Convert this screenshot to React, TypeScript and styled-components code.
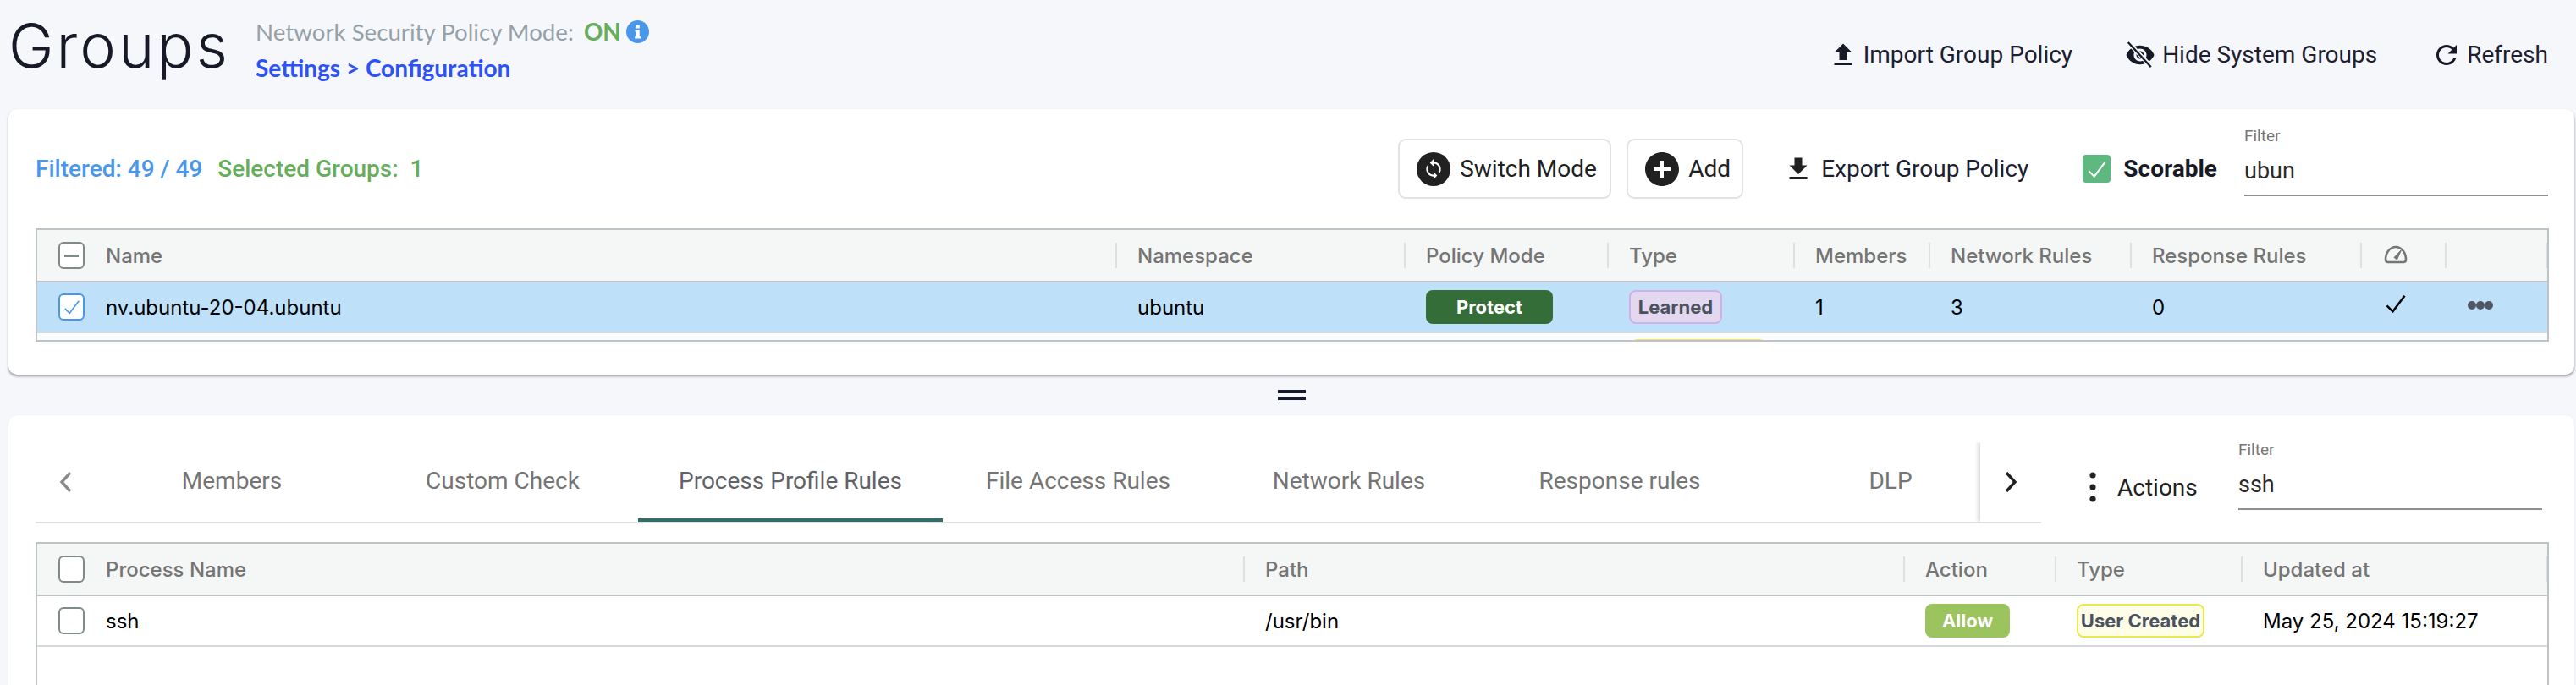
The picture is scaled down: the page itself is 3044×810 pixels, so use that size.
import React from "react";
import styled, {createGlobalStyle} from "styled-components";

const GlobalStyle = createGlobalStyle`
    html, body {
        margin: 0;
        padding: 0;
        background: #f5f7fb;
        font-family: "Roboto", "Liberation Sans", sans-serif;
    }
    * {
        box-sizing: border-box;
    }
`

const Page = styled.div`
    width: 3044px;
    height: 810px;
    overflow: hidden;
    padding: 0 2px 0 10px;
    background: #f5f7fb;
    display: flex;
    flex-direction: column;
`

const Header = styled.div`
    height: 129px;
    flex: none;
    display: flex;
    align-items: center;
    padding-right: 31px;
`

const Title = styled.h1`
    width: 292px;
    margin: -22px 0 0;
    font-family: "Inter", sans-serif;
    font-size: 72px;
    line-height: 76px;
    font-weight: 300;
    color: #171a26;
    letter-spacing: 3px;
`

const SubColumn = styled.div`
    display: flex;
    flex-direction: column;
    margin-top: -12px;
    font-family: "Lato", sans-serif;
`

const ModeLine = styled.div`
    display: flex;
    align-items: center;
    height: 42px;
    font-size: 27.7px;
    color: #95a1a8;
`

const ModeValue = styled.span`
    margin-left: 12px;
    margin-right: 6px;
    color: #66ad5c;
    font-weight: 700;
`

const SettingsLink = styled.a`
    height: 42px;
    line-height: 42px;
    font-size: 28px;
    font-weight: 700;
    color: #2d52f5;
`

const HeaderActions = styled.div`
    margin-left: auto;
    display: flex;
    align-items: center;
`

const ActionLink = styled.div<{$gap?: number; $left?: number}>`
    display: flex;
    align-items: center;
    gap: ${p => p.$gap ?? 14}px;
    margin-left: ${p => p.$left ?? 0}px;
    font-size: 28px;
    color: #1c2030;
    white-space: nowrap;
`

const Card = styled.div<{$grow?: boolean}>`
    flex: ${p => p.$grow ? "1" : "none"};
    padding-bottom: ${p => p.$grow ? 0 : 39}px;
    background: #fff;
    border-radius: 10px;
    box-shadow: ${p => p.$grow ? "0 0 2px rgba(0,0,0,.08)" : "0 2px 3px rgba(0,0,0,.4)"};
`

const Toolbar = styled.div`
    height: 141px;
    display: flex;
    align-items: center;
    padding: 0 31px 0 32px;
`

const Counters = styled.div`
    display: flex;
    gap: 18px;
    font-size: 28px;
    font-weight: 500;
`

const Counter = styled.span<{$color: string}>`
    color: ${p => p.$color};
    white-space: pre;
`

const ToolbarRight = styled.div`
    margin-left: auto;
    display: flex;
    align-items: center;
`

const OutlineButton = styled.button<{$width: number; $left: number}>`
    width: ${p => p.$width}px;
    height: 71px;
    margin-left: ${p => p.$left}px;
    display: flex;
    align-items: center;
    gap: 11px;
    padding: 0 0 0 20px;
    background: #fff;
    border: 2px solid #e2e2e2;
    border-radius: 9px;
    font-family: inherit;
    font-size: 28px;
    color: #212121;
    white-space: nowrap;
`

const ScorableLabel = styled.label`
    display: flex;
    align-items: center;
    gap: 15px;
    margin-left: 64px;
    font-size: 28px;
    font-weight: 700;
    color: #171a26;
`

const GreenBox = styled.span`
    width: 33px;
    height: 33px;
    display: flex;
    align-items: center;
    justify-content: center;
    border-radius: 4px;
    background: #5fb880;
`

const FilterField = styled.div<{$width: number; $left: number; $lift: number}>`
    width: ${p => p.$width}px;
    margin-left: ${p => p.$left}px;
    margin-bottom: ${p => p.$lift}px;
    border-bottom: 2px solid #8f8f8f;
    padding-bottom: 11px;
`

const FilterLabel = styled.div`
    height: 24px;
    line-height: 24px;
    font-size: 19px;
    color: #757575;
`

const FilterValue = styled.div`
    height: 34px;
    margin-top: 12px;
    line-height: 34px;
    font-size: 27px;
    color: #2b2b2b;
`

const TableFrame = styled.div<{$height: number}>`
    height: ${p => p.$height}px;
    margin: 0 30px 0 32px;
    border: 2px solid #bdc3c7;
    overflow: hidden;
`

const OpenTableFrame = styled(TableFrame)`
    border-bottom: none;
`

const Row = styled.div<{$columns: string; $bg?: string; $head?: boolean}>`
    display: grid;
    grid-template-columns: ${p => p.$columns};
    height: ${p => p.$head ? 62 : 60}px;
    align-items: center;
    background: ${p => p.$bg ?? "#fff"};
    border-bottom: 2px solid ${p => p.$head ? "#bdc3c7" : "#d7dadd"};
`

const HeadCell = styled.div<{$first?: boolean; $end?: boolean}>`
    height: 30px;
    display: flex;
    align-items: center;
    gap: 25px;
    padding-left: ${p => p.$first ? "25px" : "24px"};
    border-left: ${p => p.$first ? "none" : "2px solid #dde0e0"};
    border-right: ${p => p.$end ? "2px solid #dde0e0" : "none"};
    font-family: "Inter", sans-serif;
    font-size: 24px;
    font-weight: 500;
    color: #757575;
    white-space: nowrap;
`

const Cell = styled.div<{$first?: boolean; $pad?: number; $raise?: number}>`
    display: flex;
    align-items: center;
    gap: 25px;
    padding-left: ${p => p.$first ? 25 : (p.$pad ?? 26)}px;
    padding-bottom: ${p => p.$raise ?? 0}px;
    font-family: "Inter", sans-serif;
    font-size: 24px;
    color: #000;
    white-space: nowrap;
`

// the next row is cut off by the frame, only the top edge of its badge shows
const ClippedCell = styled(Cell)`
    align-self: start;
    padding-top: 7px;
`

const CheckBox = styled.span<{$blue?: boolean}>`
    width: 31px;
    height: 32px;
    flex: none;
    display: flex;
    align-items: center;
    justify-content: center;
    border: 2px solid ${p => p.$blue ? "#4a97ea" : "#808a8a"};
    border-radius: 6px;
    background: #fff;
`

const Badge = styled.span<{$bg: string; $color: string; $border?: string; $width: number}>`
    width: ${p => p.$width}px;
    height: 40px;
    display: flex;
    align-items: center;
    justify-content: center;
    background: ${p => p.$bg};
    border: ${p => p.$border ? `2px solid ${p.$border}` : "none"};
    border-radius: 8px;
    color: ${p => p.$color};
    font-size: 22px;
    font-weight: 700;
`

const Handle = styled.div`
    height: 48px;
    flex: none;
    display: flex;
    flex-direction: column;
    align-items: center;
    justify-content: center;
    gap: 4px;
`

const HandleBar = styled.span`
    width: 33px;
    height: 4px;
    background: #171a2e;
`

const TabsBar = styled.div`
    height: 150px;
    display: flex;
    align-items: flex-end;
    padding: 0 38px 22px 32px;
`

const TabStrip = styled.div`
    width: 2370px;
    height: 96px;
    flex: none;
    display: flex;
    border-bottom: 2px solid #e0e0e0;
`

const ScrollButton = styled.div<{$shadow?: boolean}>`
    width: 72px;
    flex: none;
    display: flex;
    align-items: center;
    justify-content: center;
    background: #fff;
    box-shadow: ${p => p.$shadow ? "-3px 0 4px rgba(0,0,0,.14)" : "none"};
    clip-path: inset(0 0 0 -8px);
    position: relative;
`

const TabViewport = styled.div`
    flex: 1;
    min-width: 0;
    display: flex;
    overflow: hidden;
`

const Tab = styled.div<{$active?: boolean; $width: number}>`
    width: ${p => p.$width}px;
    flex: none;
    display: flex;
    align-items: center;
    justify-content: center;
    border-bottom: 4px solid ${p => p.$active ? "#2d7069" : "transparent"};
    font-size: 28px;
    color: ${p => p.$active ? "#5f6368" : "#757575"};
    white-space: nowrap;
`

const ActionsMenu = styled.div`
    width: 174px;
    height: 96px;
    margin-left: 43px;
    display: flex;
    align-items: center;
    gap: 11px;
    padding-top: 10px;
    font-size: 28px;
    color: #212121;
`

const Icon = styled.svg<{$size: number}>`
    width: ${p => p.$size}px;
    height: ${p => p.$size}px;
    flex: none;
    display: block;
`

const GROUP_COLUMNS = "1274px 341px 240px 220px 160px 238px 272px 100px 121px";
const PROCESS_COLUMNS = "1425px 780px 179px 220px 362px";

const UploadIcon = () => (
    <Icon $size={36} viewBox="0 0 24 24" fill="#171a26">
        <path d="M9 16h6v-6h4l-7-7-7 7h4zm-4 2h14v2H5z"/>
    </Icon>
)

const DownloadIcon = () => (
    <Icon $size={36} viewBox="0 0 24 24" fill="#212121">
        <path d="M19 9h-4V3H9v6H5l7 7 7-7zM5 18v2h14v-2H5z"/>
    </Icon>
)

const EyeSlashIcon = () => (
    <Icon $size={36} viewBox="0 0 24 24" fill="#171a26">
        <path d="M12 4.5C7 4.5 2.73 7.61 1 12c1.73 4.39 6 7.5 11 7.5s9.27-3.11 11-7.5c-1.73-4.39-6-7.5-11-7.5zM12 17c-2.76 0-5-2.24-5-5s2.24-5 5-5 5 2.24 5 5-2.24 5-5 5zm0-8c-1.66 0-3 1.34-3 3s1.34 3 3 3 3-1.34 3-3-1.34-3-3-3z"/>
        <path d="M3 2.500 21 21.500" stroke="#f5f7fb" strokeWidth="3.400"/>
        <path d="M2.500 2 20.500 21.500" stroke="#171a26" strokeWidth="1.600"/>
    </Icon>
)

const RefreshIcon = () => (
    <Icon $size={36} viewBox="0 0 24 24" fill="#171a26">
        <path d="M17.65 6.35C16.2 4.9 14.21 4 12 4c-4.42 0-7.99 3.58-7.99 8s3.57 8 7.99 8c3.73 0 6.84-2.55 7.73-6h-2.08c-.82 2.33-3.04 4-5.65 4-3.31 0-6-2.69-6-6s2.69-6 6-6c1.66 0 3.14.69 4.22 1.78L13 11h7V4l-2.35 2.35z"/>
    </Icon>
)

const InfoIcon = () => (
    <Icon $size={27} viewBox="0 0 24 24">
        <circle cx="12" cy="12" r="12" fill="#4a97ea"/>
        <path d="M10 5h4v3.400h-4zM9.400 10.200H14v7h1.400v2H9v-2h1.600v-5H9.400z" fill="#fff"/>
    </Icon>
)

const SyncIcon = () => (
    <Icon $size={40} viewBox="0 0 24 24">
        <circle cx="12" cy="12" r="12" fill="#212121"/>
        <g transform="translate(4.200 4.200) scale(.65)">
            <path fill="#fff" d="M12 4V1L8 5l4 4V6c3.31 0 6 2.69 6 6 0 1.01-.25 1.97-.7 2.8l1.46 1.46C19.54 15.03 20 13.57 20 12c0-4.42-3.58-8-8-8zm0 14c-3.31 0-6-2.69-6-6 0-1.01.25-1.97.7-2.8L5.24 7.74C4.46 8.97 4 10.43 4 12c0 4.42 3.58 8 8 8v3l4-4-4-4v3z"/>
        </g>
    </Icon>
)

const AddIcon = () => (
    <Icon $size={40} viewBox="2 2 20 20" fill="#212121">
        <path d="M12 2C6.48 2 2 6.48 2 12s4.48 10 10 10 10-4.48 10-10S17.52 2 12 2zm5 11h-4v4h-2v-4H7v-2h4V7h2v4h4v2z"/>
    </Icon>
)

const GaugeIcon = () => (
    <Icon $size={32} viewBox="0 0 32 32" fill="none" stroke="#757575">
        <path d="M7 28h18c2 0 3-1.300 3-3.200 0-8.400-5.400-14.800-12-14.800S4 16.400 4 24.800C4 26.700 5 28 7 28z" strokeWidth="2.600" transform="translate(0 -4)"/>
        <path d="M14 18.500 22.500 9.500 17.500 21z" fill="#757575" stroke="#757575" strokeWidth="1"/>
    </Icon>
)

const TickIcon = ({size, color, width}: {size: number; color: string; width: number}) => (
    <Icon $size={size} viewBox="0 0 24 24" fill="none" stroke={color} strokeWidth={width}>
        <path d="M3 14l6 6L21 4"/>
    </Icon>
)

const DotsIcon = () => (
    <Icon $size={32} viewBox="0 0 32 32" fill="#4f5666">
        <circle cx="6" cy="16" r="5"/>
        <circle cx="16" cy="16" r="5"/>
        <circle cx="26" cy="16" r="5"/>
    </Icon>
)

const KebabIcon = () => (
    <Icon $size={36} viewBox="0 0 36 36" fill="#212121">
        <circle cx="18" cy="4" r="3.600"/>
        <circle cx="18" cy="18" r="3.600"/>
        <circle cx="18" cy="32" r="3.600"/>
    </Icon>
)

const Chevron = ({left, color}: {left?: boolean; color: string}) => (
    <Icon $size={24} viewBox="0 0 24 24" fill="none" stroke={color} strokeWidth="3.400">
        <path d={left ? "M17 1 7 12l10 11" : "M7 1l10 11L7 23"}/>
    </Icon>
)

const FilterBox = ({value, width, left, lift}: {value: string; width: number; left: number; lift: number}) => (
    <FilterField $width={width} $left={left} $lift={lift}>
        <FilterLabel>Filter</FilterLabel>
        <FilterValue>{value}</FilterValue>
    </FilterField>
)

export default function App(): React.ReactElement {
    return (
        <Page>
            <GlobalStyle/>
            <Header>
                <Title>Groups</Title>
                <SubColumn>
                    <ModeLine>
                        Network Security Policy Mode:
                        <ModeValue>ON</ModeValue>
                        <InfoIcon/>
                    </ModeLine>
                    <SettingsLink>Settings &gt; Configuration</SettingsLink>
                </SubColumn>
                <HeaderActions>
                    <ActionLink $gap={6}><UploadIcon/>Import Group Policy</ActionLink>
                    <ActionLink $gap={8} $left={62}><EyeSlashIcon/>Hide System Groups</ActionLink>
                    <ActionLink $gap={6} $left={64}><RefreshIcon/>Refresh</ActionLink>
                </HeaderActions>
            </Header>

            <Card>
                <Toolbar>
                    <Counters>
                        <Counter $color="#4a97ea">Filtered: 49 / 49</Counter>
                        <Counter $color="#66ad5c">Selected Groups:  1</Counter>
                    </Counters>
                    <ToolbarRight>
                        <OutlineButton $width={252} $left={0}><SyncIcon/>Switch Mode</OutlineButton>
                        <OutlineButton $width={138} $left={18}><AddIcon/>Add</OutlineButton>
                        <ActionLink $gap={9} $left={47}><DownloadIcon/>Export Group Policy</ActionLink>
                        <ScorableLabel>
                            <GreenBox><TickIcon size={26} color="#fff" width={1.800}/></GreenBox>
                            Scorable
                        </ScorableLabel>
                        <FilterBox value="ubun" width={359} left={32} lift={18}/>
                    </ToolbarRight>
                </Toolbar>
                <TableFrame $height={134}>
                    <Row $columns={GROUP_COLUMNS} $bg="#f5f7f6" $head>
                        <HeadCell $first><CheckBox><svg width="17" height="3"><rect width="17" height="3" fill="#808a8a"/></svg></CheckBox>Name</HeadCell>
                        <HeadCell>Namespace</HeadCell>
                        <HeadCell>Policy Mode</HeadCell>
                        <HeadCell>Type</HeadCell>
                        <HeadCell>Members</HeadCell>
                        <HeadCell>Network Rules</HeadCell>
                        <HeadCell>Response Rules</HeadCell>
                        <HeadCell><GaugeIcon/></HeadCell>
                        <HeadCell $end/>
                    </Row>
                    <Row $columns={GROUP_COLUMNS} $bg="#bee1f9">
                        <Cell $first><CheckBox $blue><TickIcon size={22} color="#4a97ea" width={1.800}/></CheckBox>nv.ubuntu-20-04.ubuntu</Cell>
                        <Cell>ubuntu</Cell>
                        <Cell><Badge $bg="#356d39" $color="#fff" $width={150}>Protect</Badge></Cell>
                        <Cell><Badge $bg="#e3d8ef" $color="#4a5260" $border="#cdb1ea" $width={110}>Learned</Badge></Cell>
                        <Cell>1</Cell>
                        <Cell>3</Cell>
                        <Cell>0</Cell>
                        <Cell $pad={28} $raise={8}><TickIcon size={28} color="#000" width={2.200}/></Cell>
                        <Cell $raise={4}><DotsIcon/></Cell>
                    </Row>
                    <Row $columns={GROUP_COLUMNS} $bg="#fbfcfd">
                        <Cell/>
                        <Cell/>
                        <Cell/>
                        <ClippedCell $pad={28}><Badge $bg="#fefee8" $color="#4a5260" $border="#e8e84f" $width={160}/></ClippedCell>
                    </Row>
                </TableFrame>
            </Card>

            <Handle><HandleBar/><HandleBar/></Handle>

            <Card $grow>
                <TabsBar>
                    <TabStrip>
                        <ScrollButton><Chevron left color="#8a8a8a"/></ScrollButton>
                        <TabViewport>
                            <Tab $width={320}>Members</Tab>
                            <Tab $width={320}>Custom Check</Tab>
                            <Tab $width={360} $active>Process Profile Rules</Tab>
                            <Tab $width={320}>File Access Rules</Tab>
                            <Tab $width={320}>Network Rules</Tab>
                            <Tab $width={320}>Response rules</Tab>
                            <Tab $width={320}>DLP</Tab>
                        </TabViewport>
                        <ScrollButton $shadow><Chevron color="#212121"/></ScrollButton>
                    </TabStrip>
                    <ActionsMenu><KebabIcon/>Actions</ActionsMenu>
                    <FilterBox value="ssh" width={359} left={16} lift={16}/>
                </TabsBar>
                <OpenTableFrame $height={180}>
                    <Row $columns={PROCESS_COLUMNS} $bg="#f5f7f6" $head>
                        <HeadCell $first><CheckBox/>Process Name</HeadCell>
                        <HeadCell>Path</HeadCell>
                        <HeadCell>Action</HeadCell>
                        <HeadCell>Type</HeadCell>
                        <HeadCell $end>Updated at</HeadCell>
                    </Row>
                    <Row $columns={PROCESS_COLUMNS}>
                        <Cell $first><CheckBox/>ssh</Cell>
                        <Cell>/usr/bin</Cell>
                        <Cell><Badge $bg="#9bc45e" $color="#fff" $width={100}>Allow</Badge></Cell>
                        <Cell><Badge $bg="#fefee8" $color="#4a5260" $border="#e8e84f" $width={151}>User Created</Badge></Cell>
                        <Cell>May 25, 2024 15:19:27</Cell>
                    </Row>
                </OpenTableFrame>
            </Card>
        </Page>
    )
}
